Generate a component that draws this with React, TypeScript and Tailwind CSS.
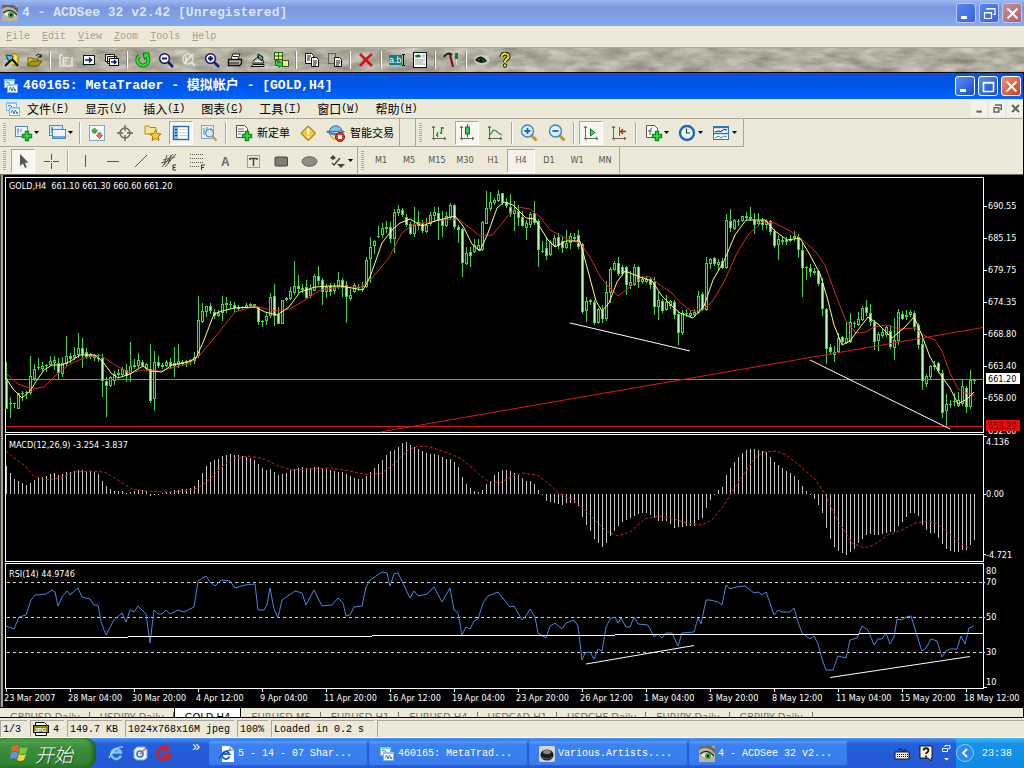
import React from 'react';

const MONO = "font-['Liberation_Mono','Noto_Sans_CJK_SC',monospace]";
const CJK = "font-['Noto_Sans_CJK_SC',sans-serif]";
const SANS = "font-['DejaVu_Sans_Condensed','DejaVu_Sans',sans-serif]";

// high,bodyTop,bodyBottom,low and a trailing 1 for a bearish (filled) candle
const CANDLES = `
187,205,234,234,1 222,228,229,243,1 228,228,229,233 218,218,234,234 216,218,219,226 216,217,218,224 181,201,218,220 189,194,204,206
183,192,193,195 187,191,194,196 189,190,191,197 181,186,190,191 181,185,188,195 183,188,198,205,1 182,188,199,202 161,181,189,191
178,181,184,188,1 172,180,183,185 158,173,180,183 163,173,180,193,1 173,177,182,184,1 178,179,182,184 179,180,183,186 179,183,184,187
179,183,206,222,1 202,206,211,242,1 201,202,211,212 196,199,206,210 194,198,200,203 192,194,200,202 189,195,201,207,1 167,191,199,207
184,190,192,194 178,185,191,193 185,187,191,192,1 188,189,194,196 169,194,226,228,1 176,187,224,236 181,187,191,193,1 188,190,192,194
185,187,191,192 183,187,191,194,1 172,188,191,202 169,186,190,193 185,187,189,191 185,186,188,192 184,185,187,190 177,182,186,189
121,145,181,183 128,136,147,148 131,131,137,142 128,131,136,139,1 134,137,141,144,1 135,138,141,142 121,129,138,146 122,128,130,138
126,129,130,134 127,130,133,137,1 130,132,134,136 131,132,133,134 128,130,133,134 128,129,131,133 129,129,131,133 132,132,147,150,1
145,146,147,152 137,141,146,150 118,122,141,143 109,121,141,151,1 132,139,149,149,1 125,125,149,149 122,123,125,126 112,116,124,125
86,111,118,120 100,111,114,118,1 109,113,115,118 105,112,123,124,1 109,114,121,123 99,101,116,116 91,101,106,110,1 103,105,117,130,1
109,112,117,123 108,111,117,121,1 108,111,116,119 97,105,112,114 103,105,113,122,1 106,110,122,148,1 114,120,124,126 108,110,117,118
109,112,113,116 107,111,112,117 82,85,112,113 62,72,84,108 65,66,71,79 51,61,62,63 48,53,60,63 46,52,54,58
47,52,64,68,1 34,37,64,78 30,34,38,41 33,35,40,42,1 39,42,50,52,1 47,49,59,60,1 32,50,59,62 36,47,51,55,1
45,48,56,58,1 43,50,57,58 37,40,49,51 32,37,41,47 32,38,46,65,1 36,44,51,62,1 37,41,51,52 28,30,43,44
29,30,52,54,1 50,52,55,68,1 53,54,88,102,1 72,78,89,90 72,77,81,92,1 64,70,77,78 64,70,75,76 46,47,75,76
16,33,49,49 17,27,34,36 23,25,28,30 15,19,26,27 18,18,28,30,1 23,27,31,33,1 19,32,39,42,1 26,35,39,56
30,36,43,51,1 36,42,51,52,1 45,48,53,65 37,39,50,53 26,38,48,50,1 44,46,75,92,1 66,76,77,78 63,73,81,85,1
65,67,80,81 60,63,71,72 58,62,71,74,1 61,66,73,78,1 55,68,73,74 58,61,68,74 58,62,64,66 55,60,72,74,1
68,69,137,139,1 122,126,136,147 124,125,127,130 125,127,148,150,1 133,134,148,149 130,135,144,148,1 106,117,144,146 92,94,118,128
86,88,95,96 82,88,99,101,1 90,92,99,101,1 91,92,110,120,1 96,107,111,114 89,92,110,111 91,92,107,113,1 101,104,107,109
101,104,107,108 103,104,110,114,1 102,107,132,140,1 117,125,132,145 124,126,136,138,1 120,127,135,136 125,126,131,134 125,127,140,144,1
137,139,158,170,1 135,138,158,160 134,138,139,142 136,138,141,143 134,137,140,142 116,121,138,139 117,119,135,136,1 82,88,135,136
83,84,89,94 82,83,89,91,1 84,87,90,96 83,86,93,94,1 39,45,93,94 34,46,53,57,1 44,45,54,55 44,46,47,51
41,41,46,47 37,41,43,46 32,42,44,46 38,45,50,59,1 38,46,49,51 43,45,50,55,1 44,46,50,54 45,46,57,60,1
54,56,71,73,1 60,64,70,85 62,65,67,70 62,65,67,70 60,64,66,67 56,61,63,66 59,62,75,83,1 68,75,93,122,1
91,92,93,105 89,93,97,102,1 93,96,98,100 95,96,109,111,1 103,108,134,141,1 133,134,174,189,1 169,172,177,180,1 171,177,180,187
158,163,177,178 161,162,167,169,1 147,163,168,169 138,147,167,168 146,148,149,153 137,144,150,151 131,133,145,146 125,132,138,141,1
129,138,147,151,1 145,147,167,175,1 157,159,166,176 154,157,161,163 151,152,160,162 150,156,172,174,1 143,165,173,185 134,137,166,170
136,139,144,145,1 135,140,142,145 135,137,140,142 136,138,152,156,1 148,150,170,174,1 160,169,206,215,1 199,201,209,212 190,191,202,204
186,190,192,195 187,188,196,198,1 195,198,238,243,1 219,229,236,251 225,229,230,233 218,226,227,231 217,225,231,232 204,211,229,231
211,213,232,238,1 195,205,232,234 204,205,206,209`
  .trim()
  .split(/\s+/)
  .map((c) => c.split(',').map(Number));

const FAST_MA =
  '6,203 13,214 22,223 30,216 37,205 44,195 52,190 62,190 71,186 80,180 95,180 103,187 111,198 118,203 130,199 143,191 151,196 162,197 172,190 188,187 196,183 204,165 214,139 222,136 234,133 255,132 265,137 277,140 289,132 300,117 315,112 330,111 340,111 363,115 370,102 382,68 392,55 400,48 410,44 422,51 435,46 455,41 463,51 472,69 480,76 488,58 497,33 504,27 513,30 526,43 535,44 548,65 555,72 566,66 580,66 587,92 596,126 602,136 609,128 617,107 625,96 640,102 652,106 662,121 672,131 680,138 693,143 704,131 713,105 724,86 735,60 746,45 765,45 775,56 787,65 800,63 810,80 820,99 827,122 834,150 842,170 850,166 861,151 868,142 878,149 892,163 905,152 914,142 921,158 930,182 940,199 950,213 958,229 967,224 974,217';
const SLOW_MA =
  '6,198 18,209 32,214 44,212 56,200 70,189 84,183 100,180 115,190 130,198 143,195 160,196 175,192 190,188 200,180 215,162 235,137 255,131 275,136 290,134 305,125 320,115 340,112 362,112 372,103 388,84 402,58 412,50 440,45 458,44 470,53 480,61 492,60 500,51 510,38 518,32 530,34 540,42 550,55 565,63 580,68 590,82 600,101 607,110 618,121 630,112 642,102 650,102 660,110 672,118 680,127 690,135 700,137 712,127 724,107 736,80 748,60 762,47 775,48 790,56 805,67 815,76 825,90 835,118 846,146 856,158 866,157 874,152 886,150 900,154 915,153 925,161 935,165 942,176 950,198 958,214 966,218 974,220';

const MACD = [
  36, 43, 49, 51, 53, 55, 53, 50, 48, 47, 46, 44, 43, 45, 44, 42, 42, 41, 40, 40, 41, 41, 42, 44, 51, 56, 59, 61, 61, 61, 63, 62,
  61, 60, 60, 61, 66, 65, 64, 63, 62, 62, 60, 60, 59, 59, 58, 56, 50, 43, 36, 32, 30, 29, 26, 25, 24, 25, 25, 26, 27, 28, 30, 34,
  38, 40, 39, 42, 45, 44, 43, 40, 39, 38, 37, 38, 38, 37, 37, 38, 39, 40, 41, 42, 42, 44, 46, 48, 49, 49, 46, 42, 38, 34, 30, 25,
  21, 20, 17, 13, 12, 15, 17, 19, 21, 23, 24, 24, 25, 27, 29, 29, 32, 37, 47, 54, 58, 61, 62, 60, 54, 51, 45, 42, 40, 40, 41, 43,
  45, 48, 51, 51, 54, 60, 65, 71, 72, 73, 74, 75, 73, 73, 73, 76, 87, 95, 101, 109, 113, 117, 113, 106, 101, 96, 92, 90, 88, 86,
  84, 83, 83, 85, 88, 91, 91, 91, 94, 98, 97, 97, 96, 96, 96, 90, 88, 78, 70, 65, 60, 57, 45, 38, 32, 27, 23, 20, 19, 19, 20, 21,
  22, 27, 32, 35, 38, 41, 43, 46, 50, 56, 61, 65, 69, 75, 83, 98, 109, 117, 121, 123, 125, 122, 119, 113, 109, 105, 104, 105, 105,
  104, 103, 102, 102, 96, 92, 87, 83, 83, 86, 95, 100, 103, 103, 108, 114, 119, 121, 122, 122, 120, 120, 115, 110,
];
const SIGNAL =
  '6,21 14,28 24,35 34,46 46,50 60,48 75,42 90,41 104,42 118,50 132,59 145,61 165,62 185,61 198,58 210,49 222,37 232,29 248,26 262,28 278,36 292,40 310,39 330,38 350,41 368,45 382,43 395,33 408,20 418,16 430,17 445,22 460,28 470,36 480,45 488,51 500,53 512,46 522,43 537,45 548,53 560,64 575,71 586,81 596,91 606,101 618,106 630,102 645,89 658,86 672,88 686,93 702,95 712,90 722,78 732,62 744,44 754,29 764,22 776,21 786,25 800,36 815,49 825,64 834,84 844,100 852,113 864,118 874,115 888,105 902,100 915,93 928,91 938,94 948,103 960,113 970,118';
const RSI =
  '6,196 14,199 19,187 26,185 31,170 35,165 46,164 52,160 55,162 58,176 62,167 67,161 70,165 78,158 82,167 90,169 94,175 98,175 101,192 106,205 114,190 122,183 126,192 130,180 134,182 138,176 146,184 150,213 154,180 158,184 162,184 166,180 170,184 178,180 184,182 194,177 198,151 206,146 210,152 215,156 221,150 230,151 235,158 245,155 255,154 258,180 264,180 267,175 270,158 274,179 278,188 282,170 295,161 302,163 306,175 314,160 322,176 332,175 338,168 343,173 346,186 350,185 354,177 362,176 366,157 370,150 382,142 387,143 390,156 394,144 398,143 410,168 414,161 418,166 427,164 434,157 442,172 450,158 454,180 458,183 462,205 466,197 470,199 474,191 478,189 483,173 488,166 498,162 510,177 514,176 522,190 526,186 530,179 535,187 538,203 546,208 550,196 555,193 562,199 566,193 574,190 578,196 582,230 585,223 590,222 594,229 598,219 602,221 606,197 610,189 615,187 618,193 621,188 626,197 630,197 634,187 638,194 648,195 654,207 658,204 662,208 666,203 672,203 678,216 682,203 694,202 698,188 701,194 706,170 710,170 718,172 722,175 726,155 730,159 736,157 745,156 754,163 758,162 762,165 766,162 770,173 774,185 778,180 782,182 790,182 794,178 798,192 802,203 810,209 814,206 818,214 822,229 826,240 833,240 838,226 846,228 850,210 857,208 862,196 868,200 874,215 878,209 882,209 886,203 890,214 894,207 897,189 902,190 906,187 911,186 918,209 922,221 926,218 931,209 937,211 942,227 946,221 950,219 957,219 961,206 965,214 969,198 974,196';

const PRICES = ['690.55', '685.15', '679.75', '674.35', '668.80', '663.40', '658.00'];
const DATES = [
  '23 Mar 2007', '28 Mar 04:00', '30 Mar 20:00', '4 Apr 12:00', '9 Apr 04:00', '11 Apr 20:00', '16 Apr 12:00', '19 Apr 04:00',
  '23 Apr 20:00', '26 Apr 12:00', '1 May 04:00', '3 May 20:00', '8 May 12:00', '11 May 04:00', '15 May 20:00', '18 May 12:00',
];

const Chart = () => (
  <svg viewBox="0 174 1023 533" className={`block w-full bg-black ${SANS}`} fontSize={9} fill="#fff" role="img" aria-label="GOLD,H4 chart">
    <g shapeRendering="crispEdges">
      <rect x={0} y={174} width={1} height={533} fill="#3c3a34" />
      <rect x={1} y={174} width={2} height={533} fill="#a8a495" />
      <rect x={0} y={174} width={1023} height={1} fill="#716f64" />
    </g>

    {/* price */}
    <g transform="translate(0 175)">
      <g shapeRendering="crispEdges" fill="none">
        <rect x={5.5} y={2.5} width={978} height={255} stroke="#fff" />
        <path d="M6 204.5H983" stroke="#7d8894" />
        <path d="M6 251.5H983" stroke="#e01818" />
      </g>
      {CANDLES.map(([h, t, b, l, bear], i) => {
        const x = 6 + i * 4;
        return (
          <g key={i} shapeRendering="crispEdges">
            <rect x={x} y={h} width={1} height={Math.max(l - h, 1)} fill="#44d64a" />
            <rect x={x - 1} y={t} width={3} height={Math.max(b - t, 1)} fill="#44d64a" />
            {b - t > 2 && <rect x={x} y={t + 1} width={1} height={b - t - 2} fill={bear ? '#b4ffb4' : '#062a06'} />}
          </g>
        );
      })}
      <g fill="none" strokeWidth={1}>
        <polyline points={SLOW_MA} stroke="#d42a1c" />
        <polyline points={FAST_MA} stroke="#ffff6a" />
        <path d="M380 257L983 152.500" stroke="#e01818" />
        <path d="M570 148L690 176M810 185L950 254" stroke="#fff" />
      </g>
      <text x={9} y={14} xmlSpace="preserve">GOLD,H4  661.10 661.30 660.60 661.20</text>
      {PRICES.map((p, i) => (
        <g key={p}>
          <rect x={984} y={31 + i * 32} width={3} height={1} />
          <text x={988} y={34 + i * 32}>{p}</text>
        </g>
      ))}
      <text x={988} y={259}>652.60</text>
      <rect x={986} y={198} width={34} height={11} />
      <text x={988} y={207} fill="#000">661.20</text>
      <rect x={986} y={245} width={34} height={11} fill="#f00808" />
      <text x={988} y={254} fill="#6a0000">653.29</text>
    </g>

    <g transform="translate(0 430)">
      <g shapeRendering="crispEdges" fill="none" stroke="#fff">
        <rect x={5.5} y={4.5} width={978} height={127} />
        <rect x={5.5} y={133.5} width={978} height={125} />
        <path d="M984 6.500h3M984 64.500h2M984 124.500h2M984 152.500h1M984 187.500h1M984 222.500h1M984 257.500h3" />
      </g>

      {/* MACD */}
      {MACD.map((v, i) => (
        <rect key={i} x={6 + i * 4} y={Math.min(v, 64)} width={1} height={Math.max(Math.abs(v - 64), 1)} fill="#c4c4c4" shapeRendering="crispEdges" />
      ))}
      <polyline points={SIGNAL} fill="none" stroke="#d02020" strokeDasharray="3 2" />
      <text x={9} y={18}>MACD(12,26,9) -3.254 -3.837</text>
      <text x={986} y={15}>4.136</text>
      <text x={986} y={67}>0.00</text>
      <text x={986} y={128}>-4.721</text>

      {/* RSI */}
      <path d="M7 152.500H983M7 187.500H983M7 222.500H983" stroke="#d8d8d8" strokeDasharray="3 3" shapeRendering="crispEdges" />
      <polyline points={RSI} fill="none" stroke="#4a86dc" />
      <path d="M7 207.500L983 203.500" stroke="#fff" shapeRendering="crispEdges" />
      <path d="M586 234L694 215.500M830 247.500L970 226.500" stroke="#fff" />
      <text x={9} y={147}>RSI(14) 44.9746</text>
      <text x={986} y={144}>80</text>
      <text x={986} y={155}>70</text>
      <text x={986} y={190}>50</text>
      <text x={986} y={225}>30</text>
      <text x={986} y={255}>10</text>

      {DATES.map((d, i) => (
        <g key={d}>
          <rect x={6 + i * 64} y={259} width={1} height={3} />
          <text x={4 + i * 64} y={271}>{d}</text>
        </g>
      ))}
    </g>
  </svg>
);

/* ---------- icons ---------- */

const Svg = ({ size = 16, children }: { size?: number; children: React.ReactNode }) => (
  <svg width={size} height={size} viewBox={`0 0 ${size} ${size}`} fill="none" className="shrink-0">
    {children}
  </svg>
);

const EyeIcon = () => (
  <Svg>
    <rect width={16} height={16} fill="#b9b4a6" />
    <path d="M0 4C5 0 12 2 16 8V3L12 0H0z" fill="#6b675d" />
    <path d="M2 9Q8 4 14 10Q8 15 2 9z" fill="#e8f0dc" />
    <circle cx={9} cy={10} r={3} fill="#3f9a3a" />
    <circle cx={9} cy={10} r={1.2} fill="#0c200c" />
    <path d="M1 8Q8 2 15 10" stroke="#222" strokeWidth={1.2} />
  </Svg>
);

const MetaIcon = () => (
  <Svg>
    <rect x={1.5} y={1.5} width={10} height={8} fill="#eef6ff" stroke="#7db4e0" />
    <rect x={1} y={1} width={11} height={2} fill="#8fc4ee" />
    <rect x={4.5} y={6.5} width={10} height={8} fill="#fff" stroke="#7db4e0" />
    <rect x={4} y={6} width={11} height={2} fill="#8fc4ee" />
    <path d="M6 12l1.500-3 1.500 4 1.500-4 1.500 4 1-2M3 5l2-1 2 2" stroke="#2f78b8" />
  </Svg>
);

const ACD: Record<string, React.ReactNode> = {
  Browse: (
    <>
      <path d="M7 2h5l2 2v9H8" fill="#f4e13c" stroke="#8a7a00" />
      <path d="M2 3l7 1-1 5-4-1z" fill="#58b8e8" stroke="#123a6a" />
      <path d="M1 14l6-6M8 7l6 7" stroke="#111" strokeWidth={2} />
    </>
  ),
  Open: (
    <>
      <path d="M1 14V6h4l1 1h5v2" fill="#d8c63a" stroke="#5e5600" />
      <path d="M1 14l3-5h11l-4 5z" fill="#a89a16" stroke="#5e5600" />
      <path d="M9 4c2-3 4-2 5 1m0-3v3h-3" stroke="#111" />
    </>
  ),
  'Full Screen': <path d="M5 3H2v11h12V5M5 6h6M5 9h4M5 12h3M5 6v7" stroke="#e8e6dc" strokeWidth={1.5} />,
  Next: (
    <>
      <rect x={2.5} y={3.5} width={11} height={9} fill="#fff" stroke="#111" />
      <path d="M4 8h6M8 5.500L10.500 8 8 10.500" stroke="#10108a" strokeWidth={1.5} />
    </>
  ),
  'Slide Show': (
    <>
      <path d="M1.500 9.500v-7h9v7zM3.500 11.500v-7h9v7z" fill="#fff" stroke="#111" />
      <rect x={5.5} y={6.5} width={9} height={7} fill="#fff" stroke="#111" />
      <path d="M7 10h5M10 8l2 2-2 2" stroke="#10108a" strokeWidth={1.5} />
    </>
  ),
  Refresh: (
    <>
      <path d="M4 4A5.500 5.500 0 1 0 12.500 5" stroke="#0c6a10" strokeWidth={4} />
      <path d="M8 1h6v6l-2-1.500-2.500 2z" fill="#2ee03a" stroke="#0c6a10" />
      <path d="M4 4A5.500 5.500 0 1 0 12.500 5" stroke="#2ee03a" strokeWidth={2.4} />
    </>
  ),
  'Zoom Out': (
    <>
      <path d="M10 10l5 5" stroke="#0c1a8a" strokeWidth={2.5} />
      <circle cx={6.5} cy={6.5} r={4.8} fill="#f4f4ff" stroke="#14145a" strokeWidth={1.4} />
      <path d="M4 6.500h5" stroke="#0c0c6a" strokeWidth={1.8} />
    </>
  ),
  'Zoom 100%': (
    <>
      <circle cx={7} cy={7} r={5} stroke="#e4e2d8" strokeWidth={1.4} />
      <path d="M3 12L12 2M10 10l4 4M5 5v4" stroke="#f0eee4" strokeWidth={1.4} />
    </>
  ),
  'Zoom In': (
    <>
      <path d="M10 10l5 5" stroke="#0c1a8a" strokeWidth={2.5} />
      <circle cx={6.5} cy={6.5} r={4.8} fill="#f4f4ff" stroke="#14145a" strokeWidth={1.4} />
      <path d="M4 6.500h5M6.500 4v5" stroke="#0c0c6a" strokeWidth={1.8} />
    </>
  ),
  Print: (
    <>
      <path d="M4 7l2-5h7l-2 5" fill="#fff" stroke="#111" />
      <path d="M1.500 7.500h13v4l-2 2h-11z" fill="#b8b6ac" stroke="#111" strokeWidth={1.3} />
      <path d="M2 11h10M6 4.500h5" stroke="#111" />
    </>
  ),
  Acquire: (
    <>
      <path d="M2 11h12l-2-5" fill="#e8e6dc" stroke="#111" />
      <path d="M3 12.500h11v2H1z" fill="#f2e24a" stroke="#111" />
      <path d="M8 2l5 3-1 4-4-3z" fill="#38a89a" stroke="#111" />
      <path d="M3 9l6-5" stroke="#111" />
    </>
  ),
  Convert: (
    <>
      <rect x={1.5} y={0.5} width={8} height={7} fill="#f2ee80" stroke="#2a5a10" />
      <path d="M5.500 1v7M1 4h9" stroke="#2a5a10" />
      <rect x={9.5} y={8.5} width={6} height={6} fill="#f2ee80" stroke="#2a5a10" />
      <path d="M2.500 8.500v5H6v2l4-3-4-3.500v2H5V8.500z" fill="#2ee03a" stroke="#0c6a10" />
    </>
  ),
  Copy: (
    <>
      <path d="M1.500 1.500h6l2 2v8h-8z" fill="#fff" stroke="#111" />
      <path d="M7.500 5.500h5l2 2v7h-7z" fill="#fff" stroke="#111" />
      <path d="M3 4h4M3 6h3M3 8h3M9 9h4M9 11h4M9 13h3" stroke="#111" />
    </>
  ),
  Move: (
    <>
      <path d="M1.500 1.500h7v10h-7z" stroke="#111" strokeDasharray="1 1" />
      <path d="M7.500 5.500h5l2 2v7h-7z" fill="#fff" stroke="#111" />
      <path d="M9 9h4M9 11h4M9 13h3" stroke="#111" />
    </>
  ),
  Delete: <path d="M2 2l12 12M14 2C9 6 5 10 2 14" stroke="#d01414" strokeWidth={2.6} />,
  Rename: (
    <>
      <rect y={3} width={13} height={10} fill="#0a8080" />
      <text x={0} y={11} fontSize={9} fill="#fff" fontFamily="Liberation Sans">a.b</text>
      <path d="M13 2.500h3M13 13.500h3M14.500 3v10" stroke="#111" />
    </>
  ),
  Describe: (
    <>
      <rect x={1.5} y={0.5} width={13} height={15} fill="#fff" stroke="#111" />
      <ellipse cx={6} cy={4} rx={3} ry={1.6} fill="#127a30" />
      <path d="M10 3h3M10 5h3M3 8h10M3 10h8M3 12h10" stroke="#999" />
    </>
  ),
  Options: (
    <>
      <path d="M7 3l3 12" stroke="#8a1414" strokeWidth={2.2} />
      <path d="M1 5c2-4 6-4 8-2" stroke="#222" strokeWidth={2.2} />
      <path d="M13.500 1v6" stroke="#127a30" strokeWidth={3} />
      <path d="M13.500 7v6" stroke="#ddd" />
    </>
  ),
  View: (
    <>
      <ellipse cx={8} cy={8} rx={8} ry={5} fill="#dcdad0" opacity={0.7} />
      <path d="M2 8Q7 2 12 9Q7 12 2 8z" fill="#127a30" stroke="#111" strokeWidth={1.4} />
      <circle cx={7} cy={8} r={1.6} fill="#111" />
    </>
  ),
  Help: (
    <>
      <path d="M4.500 5c0-5 8-4 7 0-.5 2-3.500 2-3.500 5" stroke="#111" strokeWidth={4} />
      <path d="M4.500 5c0-5 8-4 7 0-.5 2-3.500 2-3.500 5" stroke="#f4e620" strokeWidth={2} />
      <circle cx={8} cy={13.500} r={1.8} fill="#f4e620" stroke="#111" />
    </>
  ),
};

const Plus = () => <path d="M12.500 8.500h3v3h3v3h-3v3h-3v-3h-3v-3h3z" fill="#3ce04a" stroke="#0c8a1c" strokeWidth={1.4} />;
const Axes = () => <path d="M4.500 3v12.500H17M3 5l1.500-2L6 5M15 14l2 1.500-2 1.500M3 15.500h2v2" stroke="#66665c" />;

const MT: Record<string, React.ReactNode> = {
  'New Chart': (
    <>
      <rect x={2.5} y={3.5} width={12} height={10} fill="#eef6ff" stroke="#4a8cc0" />
      <path d="M5 5.500v6M4 7h2M8 6v3" stroke="#4a8cc0" />
      <Plus />
    </>
  ),
  Profiles: (
    <>
      <rect x={2.5} y={2.5} width={13} height={10} fill="#dceaf8" stroke="#4a8cc0" />
      <rect x={5.5} y={6.5} width={13} height={9} fill="#eef6ff" stroke="#4a8cc0" />
      <path d="M5 4v6M4 6h2M5 14h13" stroke="#4a8cc0" strokeWidth={1.5} />
    </>
  ),
  'Market Watch': (
    <>
      <rect x={2.5} y={2.5} width={15} height={15} fill="#f4f9ff" stroke="#7aaad0" />
      <path d="M7.500 5l3 3h-1.500v2H6V8H4.500z" fill="#38c040" stroke="#0c7a1c" strokeWidth={0.7} />
      <path d="M12.500 15.500l3-3H14v-2.500h-3v2.500H9.500z" fill="#f47a50" stroke="#b02a10" strokeWidth={0.7} />
    </>
  ),
  'Data Window': (
    <>
      <circle cx={10} cy={10} r={5} stroke="#66665c" strokeWidth={1.4} />
      <path d="M10 2v6M10 12v6M2 10h6M12 10h6" stroke="#66665c" strokeWidth={1.4} />
    </>
  ),
  Navigator: (
    <>
      <path d="M2 3h4l1 1.500h6V11H2z" fill="#f8e48a" stroke="#b08a20" />
      <path d="M12.500 7l1.700 3.600 4 .4-3 2.700.9 3.800-3.600-2-3.500 2 .9-3.800-3-2.700 4-.4z" fill="#f8c838" stroke="#a87410" />
    </>
  ),
  Terminal: (
    <>
      <rect x={2.5} y={3.5} width={15} height={13} fill="#fff" stroke="#2468a8" strokeWidth={1.4} />
      <rect x={3} y={4} width={4} height={12} fill="#7ab2e4" />
      <path d="M9 6.500h7M9 9.500h7M9 12.500h7" stroke="#c4d4e4" />
      <path d="M5 6v1M5 9v1M5 12v1" stroke="#123a6a" strokeWidth={2} />
    </>
  ),
  Tester: (
    <>
      <rect x={2.5} y={2.5} width={12} height={13} fill="#e4f0fa" stroke="#7aaad0" />
      <path d="M5 5v7M8 4v5M12 5v4" stroke="#4a8cc0" />
      <circle cx={10.500} cy={10} r={4} fill="#cfe6f8" fillOpacity={0.8} stroke="#4a7ca8" />
      <path d="M13 13l4.500 4.500" stroke="#d09a30" strokeWidth={2.4} />
    </>
  ),
  'New Order': (
    <>
      <path d="M3.500 2.500h8l3 3v9h-11z" fill="#fff" stroke="#555" />
      <path d="M5 6h6M5 8.500h6M5 11h3" stroke="#666" />
      <Plus />
    </>
  ),
  MetaEditor: (
    <>
      <rect x={5} y={5} width={10.500} height={10.500} rx={1} transform="rotate(45 10.250 10.250)" fill="#f8c838" stroke="#a87410" />
      <path d="M10.300 5.500v6" stroke="#fff" strokeWidth={2.2} />
      <circle cx={10.300} cy={14} r={1.2} fill="#fff" />
    </>
  ),
  Expert: (
    <>
      <path d="M4 11c1 6 8 7 11 2" fill="#f8d878" stroke="#b08a20" />
      <path d="M3 9C4 1 15 1 16 8z" fill="#7cc0ee" stroke="#2468a8" />
      <path d="M1 8c4 4 13 4 17 0" stroke="#3a86c8" strokeWidth={2.4} />
      <circle cx={14} cy={14} r={4.500} fill="#e03a20" stroke="#8a1a0c" />
      <rect x={12} y={12} width={4} height={4} fill="#fff" />
    </>
  ),
  'Bar Chart': (
    <>
      <Axes />
      <path d="M8.500 9v5M7 12h1.500M12.500 4v7M12.500 5H15M11 10h1.500" stroke="#1c8a2c" strokeWidth={1.3} />
    </>
  ),
  Candlesticks: (
    <>
      <Axes />
      <path d="M10.500 1v13" stroke="#0c7a1c" />
      <rect x={8.5} y={4} width={4} height={7} fill="#38c848" stroke="#0c7a1c" />
    </>
  ),
  'Line Chart': (
    <>
      <Axes />
      <path d="M5 12c3-5 4-6 6-4s4 3 6 4" stroke="#3a9a48" strokeWidth={1.3} />
    </>
  ),
  'Zoom In Chart': (
    <>
      <path d="M12 12l5.500 5.500" stroke="#c8922a" strokeWidth={3} />
      <circle cx={8.500} cy={8} r={6} fill="#dceefa" stroke="#3a86c8" strokeWidth={1.4} />
      <path d="M5.500 8h6M8.500 5v6" stroke="#1c68b0" strokeWidth={1.8} />
    </>
  ),
  'Zoom Out Chart': (
    <>
      <path d="M12 12l5.500 5.500" stroke="#c8922a" strokeWidth={3} />
      <circle cx={8.500} cy={8} r={6} fill="#dceefa" stroke="#3a86c8" strokeWidth={1.4} />
      <path d="M5.500 8h6" stroke="#1c68b0" strokeWidth={1.8} />
    </>
  ),
  'Auto Scroll': (
    <>
      <Axes />
      <path d="M9.500 6l4.500 3.500L9.500 13z" fill="#5ac868" stroke="#0c7a1c" />
    </>
  ),
  'Chart Shift': (
    <>
      <Axes />
      <path d="M10.500 4v9" stroke="#66665c" />
      <path d="M17 8.500h-5M14 6l-2.500 2.500L14 11" stroke="#b02a10" strokeWidth={1.3} />
    </>
  ),
  Indicators: (
    <>
      <path d="M3.500 2.500h8l3 3v9h-11z" fill="#fff" stroke="#555" />
      <path d="M9 5c-2 0-2 2-2 4v3M5 8h4" stroke="#555" />
      <Plus />
    </>
  ),
  Periods: (
    <>
      <circle cx={10} cy={10} r={7} fill="#f0f8ff" stroke="#1c68b0" strokeWidth={2.4} />
      <path d="M9.500 5.500V10H13" stroke="#333" strokeWidth={1.2} />
    </>
  ),
  Templates: (
    <>
      <rect x={2.5} y={3.5} width={15} height={13} fill="#fff" stroke="#2a7ab0" />
      <path d="M3 4.500h14M3 10.500h14" stroke="#2a7ab0" strokeWidth={1.4} />
      <path d="M4 9l3-1 3 .5 3-2 3 .5" stroke="#222" />
      <path d="M4 15l3-2 3 2 3-2 3 1" stroke="#1c8a7c" />
    </>
  ),
  Cursor: <path d="M7 3v12l3-2.500 2 4.500 1.800-1-2-4.200h3.700z" fill="#555" />,
  Crosshair: <path d="M10.500 3v6M10.500 12v6M3 10.500h6M12 10.500h6M10 10.500h1" stroke="#55554c" />,
  'Vertical Line': <path d="M10.500 4v12" stroke="#55554c" />,
  'Horizontal Line': <path d="M4 10.500h12" stroke="#55554c" />,
  Trendline: <path d="M4 16L16 4" stroke="#55554c" />,
  Channel: (
    <>
      <path d="M3 16L14 3M6 16L17 3M2 12l10-3M4 9l12-3M8 4L5 14M12 4L9 13" stroke="#55554c" />
      <path d="M17 14h-3v5h3M14 16.500h2.500" stroke="#333" />
    </>
  ),
  Fibonacci: (
    <>
      <path d="M3 3.500h14M3 7.500h14M3 11.500h14M3 15.500h9" stroke="#55554c" strokeDasharray="1 1" />
      <path d="M14.500 19v-5H18M14 16.500h3" stroke="#333" />
    </>
  ),
  Text: <text x={6} y={14.500} fontSize={12} fontWeight={700} fill="#666" fontFamily="Liberation Sans">A</text>,
  'Text Label': (
    <>
      <rect x={4.5} y={4.500} width={12} height={12} stroke="#55554c" strokeDasharray="1 1" />
      <path d="M7 7.500h7M10.500 7v8M7 7v2M14 7v2" stroke="#444" strokeWidth={1.5} />
    </>
  ),
  Rectangle: <rect x={4} y={6} width={12.500} height={9} rx={1} fill="#7c7c78" stroke="#44443c" />,
  Ellipse: <ellipse cx={10.500} cy={10.500} rx={7.500} ry={4.800} fill="#8c8c88" stroke="#66665c" />,
  Arrows: (
    <>
      <path d="M3 7l3-3 3 3-3 2zM10 13h8l-4 4z" fill="#44443c" />
      <path d="M5 12l2 2 6-7" stroke="#44443c" strokeWidth={1.4} />
    </>
  ),
};

/* ---------- shared pieces ---------- */

const Sep = () => <span className="mx-[3px] h-[18px] w-[2px] border-l border-[#8d8b7e] bg-white" />;
const MtSep = () => <span className="mx-[2px] h-[22px] w-[2px] shrink-0 border-l border-[#aca899] bg-white" />;
const Grip = () => (
  <span className="mx-[3px] h-[20px] w-[3px] shrink-0 bg-[repeating-linear-gradient(#a8a595_0_1px,#f4f2e8_1px_2px)]" />
);
const Arrow = () => (
  <svg width={5} height={3} viewBox="0 0 5 3" className="shrink-0">
    <path d="M0 0h5L2.500 3z" fill="#000" />
  </svg>
);

const Tool = ({ name, pressed, menu, label }: { name: string; pressed?: boolean; menu?: boolean; label?: string }) => (
  <button
    aria-label={label ?? name}
    className={`flex h-6 shrink-0 items-center justify-center ${menu ? 'w-[34px] gap-px' : label ? 'gap-1 px-1' : 'w-7'}`}
  >
    <span className={pressed ? 'flex h-6 w-6 items-center justify-center border border-[#aca899] border-r-white border-b-white bg-[#f7f6f0]' : ''}>
      <Svg size={20}>{MT[name]}</Svg>
    </span>
    {label && <span className={`text-[11px] leading-none ${CJK}`}>{label}</span>}
    {menu && <Arrow />}
  </button>
);

const ControlGlyph = ({ kind }: { kind: string }) => (
  <svg width={13} height={13} viewBox="0 0 13 13" fill="none" stroke="currentColor" strokeWidth={2}>
    {kind === 'Minimize' && <path d="M1 10.500h6" strokeWidth={3} />}
    {kind === 'Maximize' && <path d="M1.500 2.500h10v9h-10zM1 3h11" strokeWidth={1.6} />}
    {kind === 'Restore' && <path d="M1.500 5.500h7v6h-7zM1 6h8M4 3V1.500h8v6h-2M4 2h8" strokeWidth={1.2} />}
    {kind === 'Close' && <path d="M1.500 1.500l10 10M11.500 1.500l-10 10" />}
  </svg>
);

const Controls = ({ active }: { active?: boolean }) => (
  <div className="ml-auto flex gap-[3px] pr-[2px]">
    {['Minimize', active ? 'Maximize' : 'Restore', 'Close'].map((kind) => (
      <button
        key={kind}
        aria-label={kind}
        className={`flex h-5 w-5 items-center justify-center rounded-[3px] border text-white ${
          active ? 'border-white' : 'border-[#b9cdf8]'
        } ${
          kind === 'Close'
            ? active
              ? 'bg-linear-to-br from-[#f09070] to-[#cc3a10]'
              : 'bg-linear-to-br from-[#c88c9c] to-[#b0606c]'
            : active
              ? 'bg-linear-to-br from-[#5c90f4] to-[#1448cc]'
              : 'bg-linear-to-br from-[#5a84ee] to-[#3c60dc]'
        }`}
      >
        <ControlGlyph kind={kind} />
      </button>
    ))}
  </div>
);

const ACD_GROUPS = [
  ['Browse', 'Open'],
  ['Full Screen', 'Next', 'Slide Show'],
  ['Refresh', 'Zoom Out', 'Zoom 100%', 'Zoom In', 'Print', 'Acquire', 'Convert'],
  ['Copy', 'Move'],
  ['Delete'],
  ['Rename', 'Describe'],
  ['Options'],
  ['View', 'Help'],
];

const AcdSee = () => (
  <>
    <header className="flex h-[26px] items-center bg-linear-to-b from-[#9db9f2] via-[#7b96e0] via-30% to-[#84aaec] pl-[2px]">
      <EyeIcon />
      <h1 className={`pl-1 text-[13px] font-bold whitespace-pre text-[#dbe5fa] ${MONO}`}>4 - ACDSee 32 v2.42 [Unregistered]</h1>
      <Controls />
    </header>
    <nav className={`flex h-[22px] items-center gap-3 border-b border-[#aca899] bg-[#ece9d8] pl-[6px] text-[10px] text-[#a5a192] ${MONO}`}>
      {['File', 'Edit', 'View', 'Zoom', 'Tools', 'Help'].map((m) => (
        <button key={m}>
          <span className="underline">{m[0]}</span>
          {m.slice(1)}
        </button>
      ))}
    </nav>
    <div className="relative flex h-6 items-center overflow-hidden bg-[#aeab9c]">
      <svg className="absolute inset-0 h-full w-full" aria-hidden="true">
        <filter id="marble" colorInterpolationFilters="sRGB">
          <feTurbulence type="fractalNoise" baseFrequency="0.04 0.12" numOctaves={5} seed={7} />
          <feColorMatrix values="0.4 0 0 0 0.49  0.4 0 0 0 0.48  0.4 0 0 0 0.42  0 0 0 0 1" />
        </filter>
        <rect width="100%" height="100%" filter="url(#marble)" />
      </svg>
      <div className="relative flex items-center">
        {ACD_GROUPS.map((group, i) => (
          <React.Fragment key={i}>
            {i > 0 && <Sep />}
            {group.map((name) => (
              <button key={name} aria-label={name} className="flex w-[23px] justify-center">
                <Svg>{ACD[name]}</Svg>
              </button>
            ))}
          </React.Fragment>
        ))}
      </div>
    </div>
  </>
);

const MENUS = [
  ['文件', 'F'],
  ['显示', 'V'],
  ['插入', 'I'],
  ['图表', 'C'],
  ['工具', 'T'],
  ['窗口', 'W'],
  ['帮助', 'H'],
];

const TABS = [
  'GBPUSD,Daily', 'USDJPY,Daily', 'GOLD,H4', 'EURUSD,M5', 'EURUSD,H1', 'EURUSD,H4', 'USDCAD,H1', 'USDCHF,Daily', 'EURJPY,Daily', 'GBPJPY,Daily',
];

const MetaTrader = () => (
  <main className="border-t border-r border-black bg-[#ece9d8]">
    <header className="flex h-[26px] items-center bg-linear-to-b from-[#0a52d8] via-[#0054e8] to-[#0066ff] pl-[3px]">
      <MetaIcon />
      <h2 className={`pl-1 text-[13px] font-bold whitespace-pre text-white ${MONO}`}>460165: MetaTrader - 模拟帐户 - [GOLD,H4]</h2>
      <Controls active />
    </header>
    <nav className="flex h-5 items-center border-b border-[#aca899] pl-[5px]">
      <MetaIcon />
      <div className="flex gap-4 pl-[6px]">
        {MENUS.map(([title, key]) => (
          <button key={key} className={`flex items-center text-[12px] leading-none ${CJK}`}>
            {title}
            <span className={`text-[10px] ${MONO}`}>
              (<span className="underline">{key}</span>)
            </span>
          </button>
        ))}
      </div>
      <div className="ml-auto flex items-center gap-[2px] text-[#66645a]">
        {['Minimize', 'Restore', 'Close'].map((kind) => (
          <button key={kind} aria-label={`${kind} chart`} className="flex h-4 w-4 items-center justify-center bg-[#f4f2ea]">
            <svg width={9} height={9} viewBox="0 0 13 13" fill="none" stroke="currentColor" strokeWidth={2}>
              {kind === 'Minimize' && <path d="M2 11h8" strokeWidth={3} />}
              {kind === 'Restore' && <path d="M1.500 5.500h7v6h-7zM4 3V1.500h8v6h-2" />}
              {kind === 'Close' && <path d="M1.500 1.500l10 10M11.500 1.500l-10 10" strokeWidth={3} />}
            </svg>
          </button>
        ))}
      </div>
    </nav>

    <div className="flex h-7">
      <div className="flex items-center border-r border-b border-[#aca899] pr-px">
        <Grip />
        <Tool name="New Chart" menu />
        <Tool name="Profiles" menu />
        <MtSep />
        <Tool name="Market Watch" />
        <Tool name="Data Window" />
        <Tool name="Navigator" />
        <Tool name="Terminal" pressed />
        <Tool name="Tester" />
        <MtSep />
        <Tool name="New Order" label="新定单" />
        <Tool name="MetaEditor" />
        <Tool name="Expert" label="智能交易" />
      </div>
      <div className="w-4 border-r border-b border-[#aca899]" />
      <div className="flex items-center border-r border-b border-[#aca899] pr-[2px]">
        <Grip />
        <Tool name="Bar Chart" />
        <Tool name="Candlesticks" pressed />
        <Tool name="Line Chart" />
        <MtSep />
        <Tool name="Zoom In Chart" />
        <Tool name="Zoom Out Chart" />
        <MtSep />
        <Tool name="Auto Scroll" pressed />
        <Tool name="Chart Shift" />
        <MtSep />
        <Tool name="Indicators" menu />
        <Tool name="Periods" menu />
        <Tool name="Templates" menu />
      </div>
    </div>

    <div className="flex h-[27px]">
      <div className="flex items-center border-r border-[#aca899]">
        <Grip />
        <Tool name="Cursor" pressed />
        <Tool name="Crosshair" />
        <MtSep />
        {['Vertical Line', 'Horizontal Line', 'Trendline', 'Channel', 'Fibonacci', 'Text', 'Text Label', 'Rectangle', 'Ellipse'].map((n) => (
          <Tool key={n} name={n} />
        ))}
        <Tool name="Arrows" menu />
      </div>
      <div className={`flex items-center border-r border-[#aca899] text-[9px] text-[#55554c] ${SANS}`}>
        <Grip />
        {['M1', 'M5', 'M15', 'M30', 'H1', 'H4', 'D1', 'W1', 'MN'].map((tf) => (
          <button
            key={tf}
            className={`h-6 w-7 border ${tf === 'H4' ? 'border-[#aca899] border-r-white border-b-white bg-[#f3f1e8]' : 'border-transparent'}`}
          >
            {tf}
          </button>
        ))}
      </div>
    </div>

    <Chart />

    <div className={`flex h-[11px] overflow-hidden border-b border-black bg-[#ece9d8] text-[11px] text-[#77756a] ${SANS}`}>
      {TABS.map((tab) => (
        <button
          key={tab}
          className={`relative h-5 shrink-0 border-t border-t-black px-[10px] leading-[18px] ${
            tab === 'GOLD,H4'
              ? 'border-x border-x-black bg-white text-black'
              : 'after:absolute after:top-1 after:right-0 after:h-3 after:w-px after:bg-[#77756a]'
          }`}
        >
          {tab}
        </button>
      ))}
      <span className="flex-1 border-t border-black" />
    </div>
  </main>
);

const StatusBar = () => {
  const cell = 'flex items-center border-t border-l border-[#aca899] pl-[2px]';
  return (
    <div className={`flex h-5 gap-[3px] border-b border-white bg-[#ece9d8] pt-[2px] text-[10px] text-black ${MONO}`}>
      <span className={`${cell} w-[27px]`}>1/3</span>
      <span className={`${cell} w-[34px] gap-1`}>
        <Svg>
          <path d="M2.500 1.500h9l2 2v11h-11z" fill="#fff" stroke="#111" />
          <rect x={0.5} y={4.500} width={15} height={7} fill="#8a8600" stroke="#111" />
          <text x={1.5} y={10.500} fontSize={6} fontWeight={700} fill="#fff" fontFamily="Liberation Sans">JPG</text>
        </Svg>
        4
      </span>
      <span className={`${cell} w-[55px]`}>149.7 KB</span>
      <span className={`${cell} w-[109px]`}>1024x768x16M jpeg</span>
      <span className={`${cell} w-[31px]`}>100%</span>
      <span className={`${cell} w-[103px]`}>Loaded in 0.2 s</span>
      <span className={`${cell} flex-1`} />
    </div>
  );
};

const IeIcon = () => (
  <Svg>
    <path d="M13 10.500A5 5 0 1 1 13 7.500H5" stroke="#7cc8fa" strokeWidth={2.4} />
    <path d="M1 13C4 6 10 1 15 2" stroke="#a8dcfc" strokeWidth={1.4} />
  </Svg>
);

const TASKS = [
  {
    title: '5 - 14 - 07 Shar...',
    icon: (
      <Svg>
        <path d="M3 0h8l4 4v12H3z" fill="#fff" />
        <path d="M11 0v4h4" stroke="#999" />
        <path d="M10.500 10.500A3.800 3.800 0 1 1 10.500 8H4" stroke="#1c68d0" strokeWidth={2} />
        <path d="M0 13C2 8 7 4 12 4" stroke="#123a8a" />
      </Svg>
    ),
  },
  { title: '460165: MetaTrad...', icon: <MetaIcon /> },
  {
    title: 'Various.Artists....',
    icon: (
      <Svg>
        <rect width={16} height={16} rx={2} fill="#d4d4d4" />
        <ellipse cx={8} cy={9} rx={6.500} ry={5.500} fill="#1c1c1c" />
        <ellipse cx={8} cy={6} rx={4} ry={2} fill="#888" />
        <path d="M3 11q5 4 10 0" stroke="#666" />
      </Svg>
    ),
  },
  { title: '4 - ACDSee 32 v2...', icon: <EyeIcon /> },
];

const TaskBar = () => (
  <footer className={`flex h-[30px] bg-linear-to-b from-[#4a94f4] via-[#245edb] via-20% to-[#2458d4] text-[10px] text-white ${MONO}`}>
    <button className="flex w-24 items-center gap-1 rounded-r-[10px] bg-linear-to-b from-[#5eac56] via-[#3c8f3c] via-30% to-[#2f7f30] pl-[9px] shadow-[inset_-3px_0_4px_#1d5c22]">
      <svg width={22} height={22} viewBox="0 0 22 22">
        <path d="M3 5q4-3 7-1L9 10q-3-2-7 0z" fill="#f0602c" />
        <path d="M11 5q4 2 8 0l-2 6q-4 2-7 0z" fill="#7cc83c" />
        <path d="M2 11q4-2 7 0l-2 6q-3-2-6 0z" fill="#5a94f0" />
        <path d="M10 12q3 2 7 0l-2 6q-4 2-7 0z" fill="#f8d038" />
      </svg>
      <span className={`text-[19px] leading-none font-light italic [text-shadow:1px_1px_1px_#1d4d1d] ${CJK}`}>开始</span>
    </button>
    <div className="flex w-[113px] items-center gap-2 pl-[12px]">
      <button aria-label="Internet Explorer"><IeIcon /></button>
      <button aria-label="Show Desktop">
        <Svg>
          <path d="M2 5l3-3h8l2 3v8l-3 2H5l-3-2z" fill="#e8f2fc" stroke="#7ab2e4" />
          <circle cx={8} cy={9} r={3} stroke="#2a7ad0" strokeWidth={1.6} />
          <path d="M8 9l6-6" stroke="#e06a28" strokeWidth={1.6} />
        </Svg>
      </button>
      <button aria-label="Storm Player">
        <Svg>
          <path d="M13 2C5 1 1 5 2 10c1 5 10 6 12 0H8" stroke="#e01c14" strokeWidth={3} />
          <path d="M14 1L8 5l3 2" fill="#e01c14" />
        </Svg>
      </button>
      <span className="self-start pt-[2px] pl-3 text-[14px] leading-none">»</span>
    </div>
    <div className="flex flex-1 gap-px pt-[3px] pb-[2px]">
      {TASKS.map(({ title, icon }) => (
        <button
          key={title}
          className="flex max-w-[159px] flex-1 items-center gap-[3px] rounded-[2px] bg-linear-to-b from-[#5a9cf8] via-[#3c81f0] via-15% to-[#3a7cec] pl-[10px] whitespace-pre shadow-[inset_-1px_-1px_1px_#2a60c8]"
        >
          {icon}
          {title}
        </button>
      ))}
    </div>
    <div className="flex items-center gap-2 pr-[5px]">
      <Svg>
        <path d="M1 7h14v7H1z" fill="#f0f0e8" stroke="#111" />
        <path d="M3 9.500h11M3 11.500h11" stroke="#111" strokeDasharray="1 1" />
        <path d="M4 5q2-3 4 0t4-1" stroke="#111" />
      </Svg>
      <Svg>
        <path d="M2 1h12v12h-1v3l-3-3H2z" fill="#fffce0" stroke="#111" />
        <path d="M5.500 5.500c0-3 5-3 5 0 0 1.500-2.500 2-2.500 3.500M8 10.500v2" stroke="#111" strokeWidth={1.8} />
      </Svg>
      <svg width={9} height={18} viewBox="0 0 9 18" fill="none" stroke="#fff">
        <path d="M.5 4.500h5v3h-5zM3 3V1.500h5v3H6.500" />
        <path d="M2 14h5l-2.500 2.500z" fill="#fff" stroke="none" />
      </svg>
    </div>
    <div className="flex w-[68px] items-center bg-linear-to-b from-[#3cbcf8] via-[#1690e8] via-20% to-[#128ae4] pr-3">
      <button aria-label="Show hidden icons" className="flex h-[18px] w-[18px] items-center justify-center rounded-full border border-[#8cd0fa] bg-[#2a8cec]">
        <svg width={8} height={10} viewBox="0 0 8 10" fill="none" stroke="#fff" strokeWidth={2}>
          <path d="M6 1L2 5l4 4" />
        </svg>
      </button>
      <time className="ml-auto">23:38</time>
    </div>
  </footer>
);

export default function App() {
  return (
    <div className="w-full overflow-hidden">
      <AcdSee />
      <MetaTrader />
      <StatusBar />
      <TaskBar />
    </div>
  );
}
